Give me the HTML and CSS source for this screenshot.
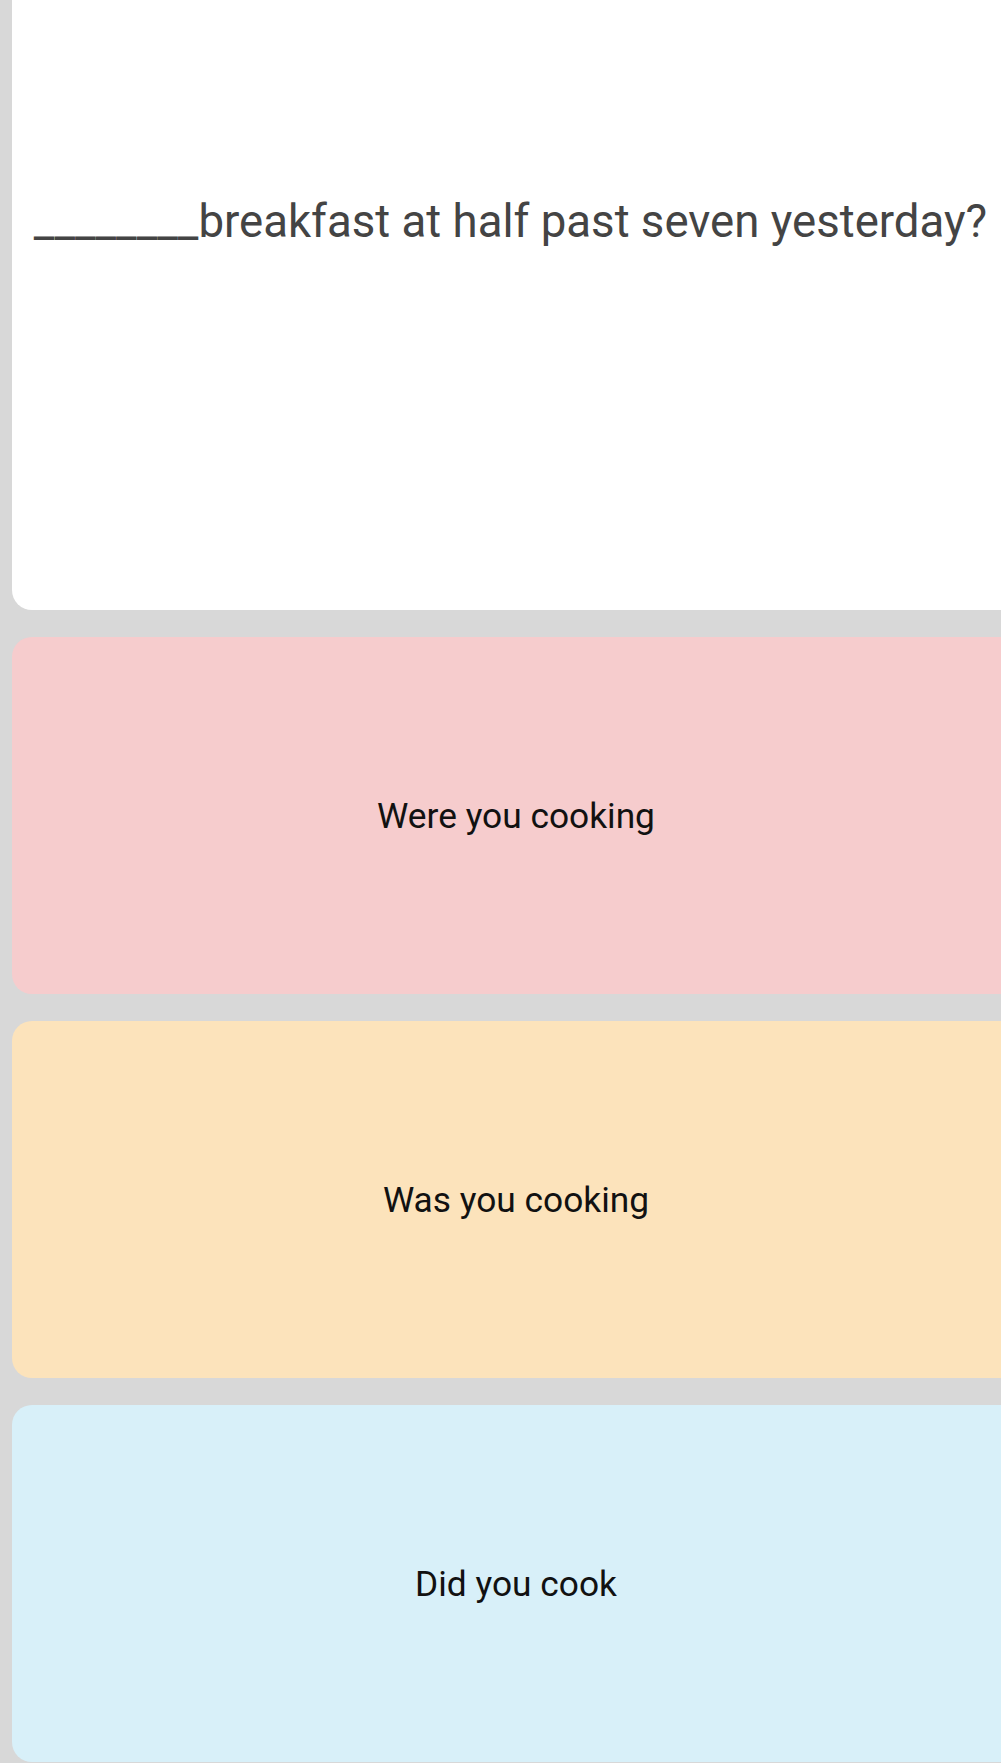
FILE: index.html
```html
<!DOCTYPE html>
<html lang="en">
<head>
    <meta charset="UTF-8">
    <meta name="viewport" content="width=device-width, initial-scale=1.0">
    <title>Quiz</title>
    <link rel="stylesheet" href="styles.css">
</head>
<body>
    <div class="quiz">
        <div class="question">
            <p class="question-text">________breakfast at half past seven yesterday?</p>
        </div>
        <div class="answer answer-red">Were you cooking</div>
        <div class="answer answer-orange">Was you cooking</div>
        <div class="answer answer-blue">Did you cook</div>
    </div>
</body>
</html>
```

FILE: styles.css
```css
body {
    margin: 0;
    background-color: #d8d8d8;
    font-family: Roboto, "Liberation Sans", sans-serif;
    overflow: hidden;
}
.quiz {
    display: flex;
    flex-direction: column;
    gap: 27px;
    width: 1008px;
    padding-left: 12px;
}
.question {
    background: white;
    height: 610px;
    border-radius: 0 0 20px 20px;
    box-sizing: border-box;
    padding-top: 196px;
    padding-right: 11px;
}
.question-text {
    margin: 0;
    font-size: 45.6px;
    line-height: 52px;
    color: #444444;
    text-align: center;
    white-space: nowrap;
}
.answer {
    height: 357px;
    border-radius: 20px;
    display: flex;
    align-items: center;
    justify-content: center;
    font-size: 35.3px;
    color: #111111;
}
.answer-red {
    background: #f6cccd;
}
.answer-orange {
    background: #fce3bb;
}
.answer-blue {
    background: #d8f0f9;
}
```
